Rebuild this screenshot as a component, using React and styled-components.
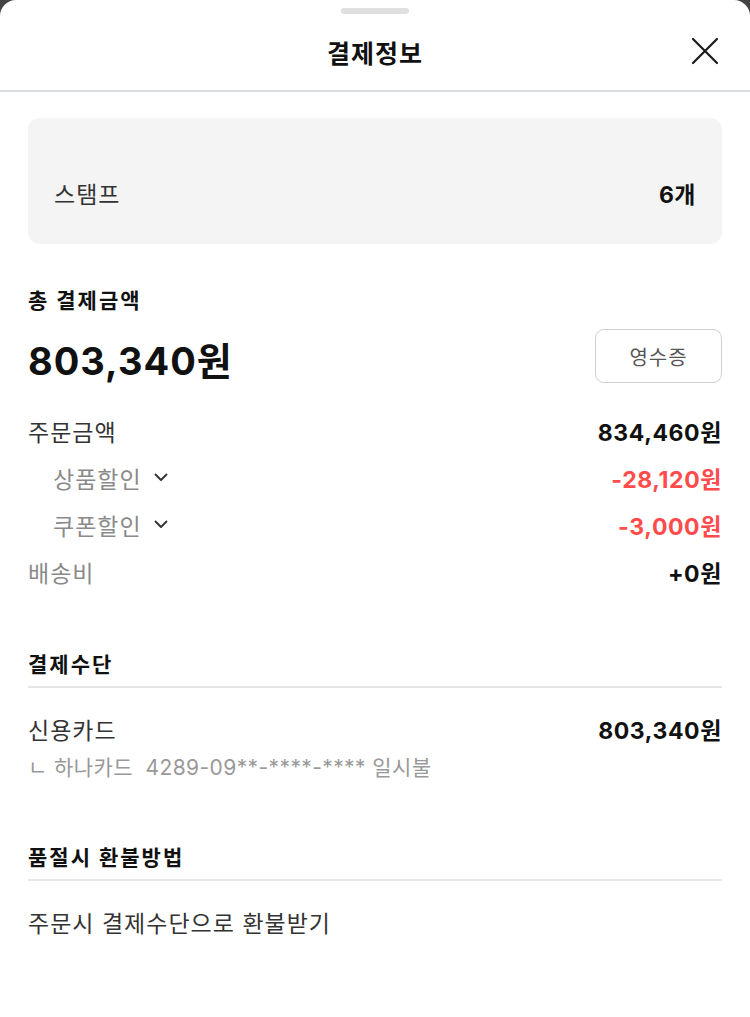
import React from 'react';
import styled, { createGlobalStyle } from 'styled-components';

const GlobalStyle = createGlobalStyle`
    html, body {
        margin: 0;
        padding: 0;
        background: #444444;
    }
    body {
        font-family: 'Inter', 'Noto Sans CJK KR', sans-serif;
        color: #222;
        -webkit-font-smoothing: antialiased;
    }
    * {
        box-sizing: border-box;
    }
`;

const Sheet = styled.div`
    background: #fff;
    border-radius: 16px 16px 0 0;
    min-height: 100vh;
    display: flex;
    flex-direction: column;
`;

const Handle = styled.div`
    width: 68px;
    height: 6px;
    border-radius: 3px;
    background: #e0e0e0;
    margin: 8px auto 0;
`;

const Header = styled.header`
    position: relative;
    height: 78px;
    display: flex;
    align-items: center;
    justify-content: center;
    border-bottom: 2px solid #d8dcdf;
`;

const Title = styled.h1`
    margin: 0;
    font-size: 25px;
    font-weight: 700;
    color: #111;
    letter-spacing: 1px;
`;

const CloseButton = styled.button`
    position: absolute;
    right: 28px;
    top: 20px;
    width: 34px;
    height: 34px;
    padding: 0;
    border: none;
    background: none;
    display: flex;
    align-items: center;
    justify-content: center;
    cursor: pointer;
`;

const Content = styled.main`
    padding: 26px 28px 40px;
`;

const StampBox = styled.div`
    background: #f4f4f4;
    border-radius: 12px;
    height: 126px;
    padding: 63px 26px 0 26px;
    display: flex;
    justify-content: space-between;
    align-items: flex-start;
`;

const StampLabel = styled.span`
    font-size: 23px;
    color: #333;
    line-height: 28px;
    letter-spacing: 1px;
`;

const StampValue = styled.span`
    font-size: 23px;
    font-weight: 700;
    color: #111;
    line-height: 28px;
    letter-spacing: 0.5px;
`;

const SectionTitle = styled.h2`
    margin: ${(props) => props.mt || 0}px 0 0;
    font-size: 21px;
    font-weight: 700;
    color: #111;
    line-height: 28px;
    letter-spacing: 2px;
    padding-bottom: ${(props) => (props.divided ? '7px' : '0')};
    border-bottom: ${(props) => (props.divided ? '2px solid #e6e6e6' : 'none')};
`;

const TotalRow = styled.div`
    margin-top: 14px;
    display: flex;
    justify-content: space-between;
    align-items: center;
    height: 54px;
`;

const TotalAmount = styled.div`
    font-size: 38px;
    font-weight: 700;
    color: #111;
    letter-spacing: 1px;
    margin-top: 4px;
`;

const ReceiptButton = styled.button`
    width: 127px;
    height: 54px;
    border: 1.5px solid #cfcfcf;
    border-radius: 9px;
    background: #fff;
    font-family: inherit;
    font-size: 20px;
    letter-spacing: 1px;
    color: #555;
    cursor: pointer;
`;

const Breakdown = styled.div`
    margin-top: 24px;
    display: flex;
    flex-direction: column;
`;

const Row = styled.div`
    height: 47px;
    display: flex;
    justify-content: space-between;
    align-items: center;
    padding-left: ${(props) => (props.indent ? '25px' : '0')};
`;

const Label = styled.span`
    display: flex;
    align-items: center;
    gap: 12px;
    font-size: 23px;
    letter-spacing: 1px;
    color: ${(props) => (props.muted ? '#8a8a8a' : '#333')};
`;

const Amount = styled.span`
    font-size: 23px;
    font-weight: 700;
    color: ${(props) => (props.negative ? '#ff4b4b' : '#111')};
    letter-spacing: 0.6px;
`;

const PayBlock = styled.div`
    margin-top: 29px;
`;

const PayRow = styled.div`
    display: flex;
    justify-content: space-between;
    align-items: center;
    line-height: 28px;
`;

const PayDetail = styled.div`
    margin-top: 9px;
    font-size: 21px;
    letter-spacing: 0.4px;
    line-height: 28px;
    color: #999;
    white-space: pre;
`;

const Plain = styled.p`
    margin: 29px 0 0;
    font-size: 23px;
    letter-spacing: 1px;
    line-height: 28px;
    color: #333;
`;

const Chevron = () => (
    <svg width="14" height="9" viewBox="0 0 14 9" fill="none">
        <path d="M1.5 1.5 L7 7 L12.5 1.5" stroke="#333" strokeWidth="1.9" strokeLinecap="round" strokeLinejoin="round" />
    </svg>
);

const CloseIcon = () => (
    <svg width="28" height="28" viewBox="0 0 28 28" fill="none">
        <path d="M2 2 L26 26 M26 2 L2 26" stroke="#1a1a1a" strokeWidth="2.2" strokeLinecap="round" />
    </svg>
);

const App = () => {
    return (
        <>
            <GlobalStyle />
            <Sheet>
                <Handle />
                <Header>
                    <Title>결제정보</Title>
                    <CloseButton aria-label="닫기">
                        <CloseIcon />
                    </CloseButton>
                </Header>

                <Content>
                    <StampBox>
                        <StampLabel>스탬프</StampLabel>
                        <StampValue>6개</StampValue>
                    </StampBox>

                    <SectionTitle mt={43}>총 결제금액</SectionTitle>
                    <TotalRow>
                        <TotalAmount>803,340원</TotalAmount>
                        <ReceiptButton>영수증</ReceiptButton>
                    </TotalRow>

                    <Breakdown>
                        <Row>
                            <Label>주문금액</Label>
                            <Amount>834,460원</Amount>
                        </Row>
                        <Row indent>
                            <Label muted>
                                상품할인 <Chevron />
                            </Label>
                            <Amount negative>-28,120원</Amount>
                        </Row>
                        <Row indent>
                            <Label muted>
                                쿠폰할인 <Chevron />
                            </Label>
                            <Amount negative>-3,000원</Amount>
                        </Row>
                        <Row>
                            <Label muted>배송비</Label>
                            <Amount>+0원</Amount>
                        </Row>
                    </Breakdown>

                    <SectionTitle mt={56} divided>
                        결제수단
                    </SectionTitle>
                    <PayBlock>
                        <PayRow>
                            <Label>신용카드</Label>
                            <Amount>803,340원</Amount>
                        </PayRow>
                        <PayDetail>{'ㄴ 하나카드  4289-09**-****-**** 일시불'}</PayDetail>
                    </PayBlock>

                    <SectionTitle mt={62} divided>
                        품절시 환불방법
                    </SectionTitle>
                    <Plain>주문시 결제수단으로 환불받기</Plain>
                </Content>
            </Sheet>
        </>
    );
};

export default App;
